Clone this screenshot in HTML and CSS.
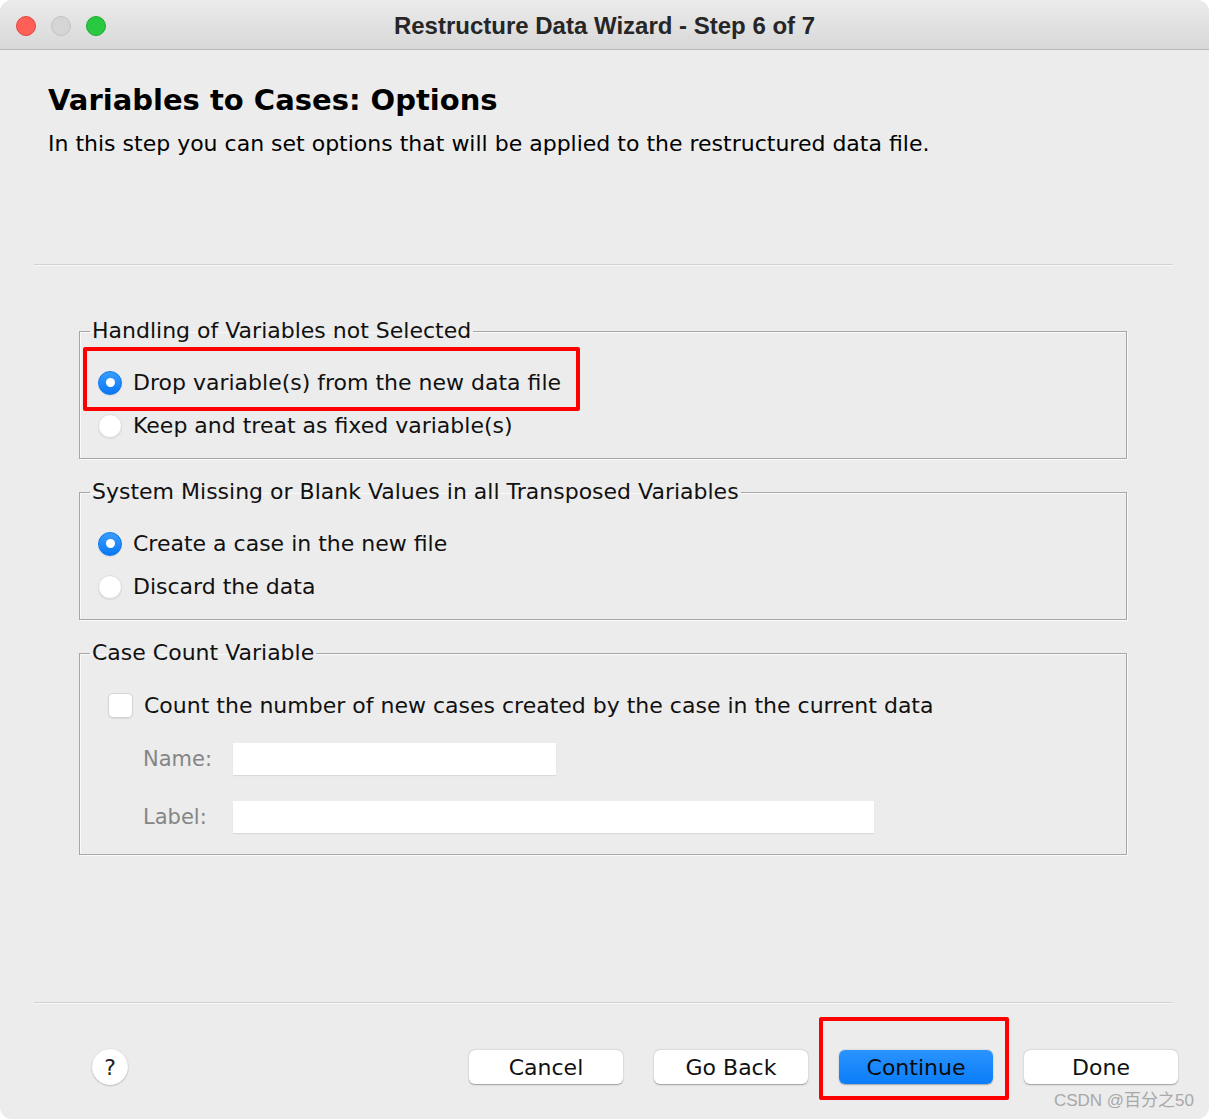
FILE: index.html
```html
<!DOCTYPE html>
<html>
<head>
<meta charset="utf-8">
<link rel="stylesheet" href="styles.css">
</head>
<body>
<div class="window">
  <div class="titlebar">
    <div class="lights">
      <span class="light red"></span>
      <span class="light gray"></span>
      <span class="light green"></span>
    </div>
    <div class="title">Restructure Data Wizard - Step 6 of 7</div>
  </div>
  <div class="content">
    <div class="header">
      <h1 class="heading">Variables to Cases: Options</h1>
      <p class="subtitle">In this step you can set options that will be applied to the restructured data file.</p>
    </div>
    <div class="sep"></div>
    <div class="groups">
      <fieldset class="group g1">
        <legend>Handling of Variables not Selected</legend>
        <div class="row hl">
          <span class="radio on"></span><span>Drop variable(s) from the new data file</span>
          <span class="redbox"></span>
        </div>
        <div class="row"><span class="radio"></span><span>Keep and treat as fixed variable(s)</span></div>
      </fieldset>
      <fieldset class="group g2">
        <legend>System Missing or Blank Values in all Transposed Variables</legend>
        <div class="row"><span class="radio on"></span><span>Create a case in the new file</span></div>
        <div class="row"><span class="radio"></span><span>Discard the data</span></div>
      </fieldset>
      <fieldset class="group g3">
        <legend>Case Count Variable</legend>
        <div class="row chk"><span class="checkbox"></span><span>Count the number of new cases created by the case in the current data</span></div>
        <div class="field first"><span class="flabel">Name:</span><span class="input short"></span></div>
        <div class="field"><span class="flabel">Label:</span><span class="input long"></span></div>
      </fieldset>
    </div>
    <div class="sep bottom"></div>
    <div class="footer">
      <span class="help">?</span>
      <div class="buttons">
        <button class="btn">Cancel</button>
        <button class="btn">Go Back</button>
        <span class="btnwrap"><button class="btn primary">Continue</button><span class="redbox2"></span></span>
        <button class="btn">Done</button>
      </div>
    </div>
    <div class="watermark">CSDN @百分之50</div>
  </div>
</div>
</body>
</html>
```
FILE: styles.css
```css
html, body {
  margin: 0;
  padding: 0;
  background: #ffffff;
}
.window {
  width: 1209px;
  height: 1119px;
  box-sizing: border-box;
  background: #ececec;
  border-radius: 12px;
  overflow: hidden;
  font-family: "DejaVu Sans", "Noto Sans CJK SC", sans-serif;
  color: #111;
  display: flex;
  flex-direction: column;
}
.titlebar {
  height: 50px;
  flex: none;
  box-sizing: border-box;
  background: linear-gradient(#ebebeb, #d8d8d8);
  border-bottom: 1px solid #b9b9b9;
  position: relative;
  display: flex;
  align-items: center;
  justify-content: center;
}
.lights {
  position: absolute;
  left: 16px;
  top: 16px;
  display: flex;
  gap: 15px;
}
.light {
  width: 20px;
  height: 20px;
  border-radius: 50%;
  box-sizing: border-box;
}
.light.red { background: #fe5f57; border: 1px solid #e2463f; }
.light.gray { background: #d5d5d5; border: 1px solid #c2c2c2; }
.light.green { background: #28c840; border: 1px solid #1eab2e; }
.title {
  font-family: "Liberation Sans", Arial, sans-serif;
  font-weight: bold;
  font-size: 24px;
  color: #262626;
  margin-top: 2px;
}
.content {
  flex: 1;
  display: flex;
  flex-direction: column;
  position: relative;
}
.header {
  padding: 28px 0 0 48px;
  height: 214px;
  box-sizing: border-box;
}
.heading {
  margin: 0;
  font-size: 29px;
  font-weight: bold;
  line-height: 44px;
  color: #000;
}
.subtitle {
  margin: 6px 0 0 0;
  font-size: 22px;
  line-height: 32px;
  color: #000;
}
.sep {
  margin: 0 36px 0 34px;
  height: 0;
  border-top: 1px solid #d2d2d2;
  border-bottom: 1px solid #f8f8f8;
}
.groups {
  padding: 51px 0 0 79px;
  height: 736px;
  box-sizing: border-box;
  display: flex;
  flex-direction: column;
  gap: 19px;
}
.group {
  margin: 0;
  width: 1048px;
  box-sizing: border-box;
  border: 1px solid #a6a6a6;
  box-shadow: 1px 1px 0 #fafafa, inset 1px 1px 0 #fafafa;
  padding: 0;
  font-size: 22px;
}
.group legend {
  margin-left: -8px;
  padding: 0 2px;
  font-size: 22px;
  line-height: 28px;
  color: #111;
}
.g1 { padding: 16px 0 11px 18px; }
.g2 { padding: 16px 0 11px 18px; }
.g3 { padding: 17px 0 8px 18px; }
.row {
  display: flex;
  align-items: center;
  gap: 11px;
  height: 43px;
  position: relative;
}
.radio {
  width: 24px;
  height: 24px;
  border-radius: 50%;
  box-sizing: border-box;
  background: #fff;
  border: 1px solid #dcdcdc;
  box-shadow: 0 1px 1px rgba(0,0,0,0.08);
  flex: none;
  position: relative;
}
.radio.on {
  background: linear-gradient(#3a9cff, #0a78f5);
  border: 1px solid #0a78f0;
}
.radio.on::after {
  content: "";
  position: absolute;
  left: 50%;
  top: 50%;
  width: 9px;
  height: 9px;
  margin: -4.5px 0 0 -4.5px;
  border-radius: 50%;
  background: #fff;
}
.redbox {
  position: absolute;
  left: -15px;
  top: -14px;
  width: 497px;
  height: 64px;
  box-sizing: border-box;
  border: 4px solid #ff0000;
  border-radius: 2px;
  pointer-events: none;
}
.chk {
  padding-left: 10px;
}
.checkbox {
  width: 25px;
  height: 25px;
  border-radius: 5px;
  box-sizing: border-box;
  background: #fff;
  border: 1px solid #d4d4d4;
  box-shadow: 0 1px 1px rgba(0,0,0,0.08);
  flex: none;
}
.field {
  display: flex;
  align-items: center;
  height: 58px;
  padding-left: 45px;
}
.field.first { margin-top: 3px; }
.flabel {
  width: 90px;
  color: #858585;
  font-size: 21px;
}
.input {
  height: 32px;
  background: #fff;
  box-shadow: 0 1px 1px rgba(0,0,0,0.08);
}
.input.short { width: 323px; }
.input.long { width: 641px; }
.footer {
  flex: 1;
  display: flex;
  align-items: flex-start;
  padding: 46px 31px 0 92px;
  box-sizing: border-box;
  justify-content: space-between;
}
.help {
  width: 36px;
  height: 36px;
  border-radius: 50%;
  background: #fff;
  box-shadow: 0 0.5px 1.5px rgba(0,0,0,0.35);
  display: flex;
  align-items: center;
  justify-content: center;
  font-size: 22px;
  color: #222;
  margin-top: -1px;
}
.buttons {
  display: flex;
  gap: 31px;
  align-items: center;
}
.btn {
  width: 154px;
  height: 34px;
  border: none;
  border-radius: 6px;
  background: #fff;
  box-shadow: 0 0.5px 1.5px rgba(0,0,0,0.35);
  font-family: "DejaVu Sans", sans-serif;
  font-size: 22px;
  color: #111;
  padding: 0;
}
.btn.primary {
  background: linear-gradient(#2a93ff, #0a7df8);
  color: #0b0b0b;
  box-shadow: 0 0.5px 1.5px rgba(0,0,0,0.3);
}
.btnwrap {
  position: relative;
  display: flex;
}
.redbox2 {
  position: absolute;
  left: -20px;
  top: -33px;
  width: 190px;
  height: 83px;
  box-sizing: border-box;
  border: 4px solid #ff0000;
  border-radius: 2px;
}
.watermark {
  position: absolute;
  right: 15px;
  bottom: 8px;
  font-family: "Liberation Sans", "Noto Sans CJK SC", sans-serif;
  font-size: 17px;
  color: #a8a8a8;
}
```
